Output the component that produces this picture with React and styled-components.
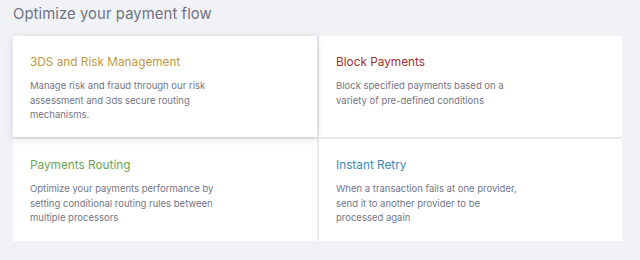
import React from "react";
import styled, { createGlobalStyle } from "styled-components";

const Global = createGlobalStyle`
  html, body { margin: 0; padding: 0; background: #f1f2f6; }
  body { font-family: "Inter", "Open Sans", sans-serif; }
`;

const Page = styled.div`
  width: 640px;
  height: 260px;
  box-sizing: border-box;
  padding: 4px 18px 0 13px;
  background: #f1f2f6;
`;

const Heading = styled.h1`
  margin: 0;
  font-size: 14.8px;
  line-height: 20px;
  font-weight: 400;
  color: #6f7283;
  letter-spacing: 0.1px;
`;

const Grid = styled.div`
  margin-top: 12px;
  display: grid;
  grid-template-columns: 304px 303px;
  grid-template-rows: 101px 102px;
  column-gap: 2px;
  row-gap: 2px;
  width: 609px;
  background: #e9eaee;
`;

const Card = styled.div`
  background: #fff;
  box-sizing: border-box;
  padding: 18px 16px 0 17px;
  position: relative;
  z-index: ${(p) => (p.$raised ? 2 : 1)};
  box-shadow: ${(p) =>
    p.$raised ? "0 2px 8px rgba(40, 44, 60, 0.14)" : "none"};
`;

const Title = styled.h2`
  margin: 0;
  font-size: 11.8px;
  line-height: 16px;
  font-weight: 400;
  color: ${(p) => p.$color};
`;

const Desc = styled.p`
  margin: 9px 0 0;
  max-width: 189px;
  font-size: 9.5px;
  line-height: 14.5px;
  color: #747686;
`;

const items = [
  {
    title: "3DS and Risk Management",
    color: "#c09a3c",
    desc: "Manage risk and fraud through our risk assessment and 3ds secure routing mechanisms.",
    raised: true,
  },
  {
    title: "Block Payments",
    color: "#a3302f",
    desc: "Block specified payments based on a variety of pre-defined conditions",
  },
  {
    title: "Payments Routing",
    color: "#6ea453",
    desc: "Optimize your payments performance by setting conditional routing rules between multiple processors",
  },
  {
    title: "Instant Retry",
    color: "#3b89b6",
    desc: "When a transaction fails at one provider, send it to another provider to be processed again",
  },
];

export default function App() {
  return (
    <>
      <Global />
      <Page>
        <Heading>Optimize your payment flow</Heading>
        <Grid>
          {items.map((it) => (
            <Card key={it.title} $raised={it.raised}>
              <Title $color={it.color}>{it.title}</Title>
              <Desc>{it.desc}</Desc>
            </Card>
          ))}
        </Grid>
      </Page>
    </>
  );
}
